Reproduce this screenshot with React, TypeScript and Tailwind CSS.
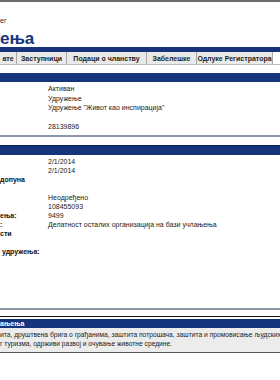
import React from 'react';

const NAVY = 'bg-[#16347c]';

type Row = { label?: string; value?: string };

const section1: Row[] = [
  { value: 'Активан' },
  { value: 'Удружење' },
  { value: 'Удружење "Живот као инспирација"' },
  {},
  { value: '28139896' },
];

const section2: Row[] = [
  { value: '2/1/2014' },
  { value: '2/1/2014' },
  { label: 'допуна' },
  {},
  { value: 'Неодређено' },
  { value: '108455093' },
  { label: 'ења:', value: '9499' },
  { label: ':', value: 'Делатност осталих организација на бази учлањења' },
  { label: 'сти' },
  {},
  { label: ' удружења:' },
];

const tabs = [
  { label: 'ате', w: 'w-[17px]' },
  { label: 'Заступници', w: 'w-[50px]' },
  { label: 'Подаци о чланству', w: 'w-[80px]' },
  { label: 'Забелешке', w: 'w-[50px]' },
  { label: 'Одлуке Регистратора', w: 'w-[76px]' },
];

function DataRows({ rows, rowH }: { rows: Row[]; rowH: string }) {
  return (
    <div className="flex flex-col">
      {rows.map((r, i) => (
        <div key={i} className={`flex items-center ${rowH}`}>
          <div className="w-[48px] shrink-0 font-bold whitespace-pre text-[#111]">{r.label}</div>
          <div className="whitespace-nowrap text-[#222]">{r.value}</div>
        </div>
      ))}
    </div>
  );
}

export default function App() {
  return (
    <div
      className="w-[280px] h-[380px] overflow-hidden bg-white text-[7px] leading-none"
      style={{ fontFamily: '"Liberation Sans", Arial, sans-serif' }}
    >
      {/* page top strip */}
      <div className="h-[2px] bg-[#6e6e6e]" />
      <div className="h-[15px]" />
      <div className="h-[8px] text-[7px] text-[#333]">er</div>
      <div className="h-[7px]" />

      {/* title */}
      <div className="h-[15px] text-[17px] font-bold leading-[13px] text-[#16347c]">ења</div>

      {/* tabs */}
      <div className={`h-[5px] ${NAVY}`} />
      <div className="flex h-[13px] items-stretch bg-[#dedede] border-b border-[#bdbdbd]">
        {tabs.map((t, i) => (
          <div
            key={i}
            className={`${t.w} flex items-center justify-center shrink-0 border-r border-[#a9a9a9] bg-[#e9e9e9] font-bold text-[#1d1d1d] whitespace-nowrap`}
          >
            {t.label}
          </div>
        ))}
        <div className="flex-1 bg-white" />
      </div>

      {/* section 1 */}
      <div className="h-[8px]" />
      <div className={`h-[9px] ${NAVY}`} />
      <div className="pt-[2px]">
        <DataRows rows={section1} rowH="h-[9.5px]" />
      </div>
      <div className="h-[3px]" />
      <div className="h-[2px] bg-[#8c97a8]" />

      {/* section 2 */}
      <div className="h-[8px]" />
      <div className={`h-[10px] ${NAVY} border-t border-[#0b1d4a]`} />
      <div className="pt-[2px]">
        <DataRows rows={section2} rowH="h-[9px]" />
      </div>

      <div className="h-[52px]" />
      <div className="h-[2px] bg-[#8c97a8]" />
      <div className="h-[6px]" />
      <div className="h-[1px] bg-[#111]" />
      <div className="h-[2px]" />

      {/* goals */}
      <div className={`h-[9px] ${NAVY} flex items-center font-bold text-white`}>ањења</div>
      <div className="bg-[#ececec] border-b border-[#555] pt-[3px] pb-[3px] text-[6.7px] text-[#222]">
        <div className="h-[9px] flex items-center whitespace-nowrap overflow-hidden">
          ита, друштвена брига о грађанима, заштита потрошача, заштита и промовисање људских
        </div>
        <div className="h-[9px] flex items-center whitespace-nowrap">
          г туризма, одрживи развој и очување животне средине.
        </div>
      </div>
    </div>
  );
}
